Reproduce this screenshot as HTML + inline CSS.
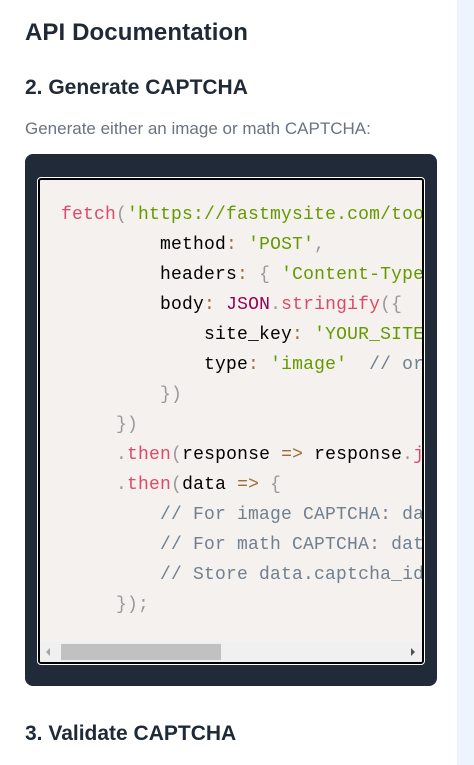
<!DOCTYPE html>
<html><head><meta charset="utf-8"><style>
html,body{margin:0;padding:0;width:474px;height:765px;overflow:hidden;background:#fff;font-family:"Liberation Sans",sans-serif;}
.strip{position:absolute;left:457px;top:0;width:17px;height:765px;background:#eef4fd;}
h1{position:absolute;left:25px;top:19px;margin:0;font-size:24px;font-weight:bold;color:#1f2937;letter-spacing:0.1px;}
h2{position:absolute;left:25px;margin:0;font-size:21px;font-weight:bold;color:#1f2937;letter-spacing:0px;}
.sub{position:absolute;left:25px;top:119px;font-size:17px;color:#6b7280;}
.box{position:absolute;left:25px;top:154px;width:412px;height:532px;background:#212a38;border-radius:8px;}
.pre{position:absolute;left:38px;top:178px;width:382px;height:482px;background:#f4f1ee;border:2px solid #000;box-shadow:0 0 0 1px #fff;border-radius:3px;overflow:hidden;}
.code{position:absolute;left:21px;top:20px;font-family:"Liberation Mono",monospace;font-size:18px;letter-spacing:0.2px;line-height:30px;white-space:pre;color:#000;}
.f{color:#dd4a68}.s{color:#669900}.p{color:#999}.k{color:#990055}.c{color:#708090}.o{color:#9a6e3a}
.sb{position:absolute;left:0;bottom:0;width:382px;height:20px;background:#f0f0f0;}
.th{position:absolute;left:21px;top:2px;width:160px;height:16px;background:#c1c1c1;}
</style></head><body>
<div class="strip"></div>
<h1>API Documentation</h1>
<h2 style="top:76px">2. Generate CAPTCHA</h2>
<div class="sub">Generate either an image or math CAPTCHA:</div>
<div class="box"></div>
<div class="pre"><div class="code"><span class="f">fetch</span><span class="p">(</span><span class="s">'https://fastmysite.com/tools/captcha'</span>
         method<span class="o">:</span> <span class="s">'POST'</span><span class="p">,</span>
         headers<span class="o">:</span> <span class="p">{</span> <span class="s">'Content-Type'</span>
         body<span class="o">:</span> <span class="k">JSON</span><span class="p">.</span><span class="f">stringify</span><span class="p">({</span>
             site_key<span class="o">:</span> <span class="s">'YOUR_SITE_KEY'</span>
             type<span class="o">:</span> <span class="s">'image'</span>  <span class="c">// or</span>
         <span class="p">})</span>
     <span class="p">})</span>
     <span class="p">.</span><span class="f">then</span><span class="p">(</span>response <span class="o">=&gt;</span> response<span class="p">.</span><span class="f">json</span>
     <span class="p">.</span><span class="f">then</span><span class="p">(</span>data <span class="o">=&gt;</span> <span class="p">{</span>
         <span class="c">// For image CAPTCHA: data</span>
         <span class="c">// For math CAPTCHA: data</span>
         <span class="c">// Store data.captcha_id</span>
     <span class="p">});</span></div>
<div class="sb"><div class="th"></div>
<svg style="position:absolute;left:5px;top:6px" width="6" height="8"><path d="M5 0L1 4L5 8Z" fill="#a3a3a3"/></svg>
<svg style="position:absolute;right:6px;top:6px" width="6" height="8"><path d="M1 0L5 4L1 8Z" fill="#505050"/></svg>
</div></div>
<h2 style="top:722px">3. Validate CAPTCHA</h2>
</body></html>
